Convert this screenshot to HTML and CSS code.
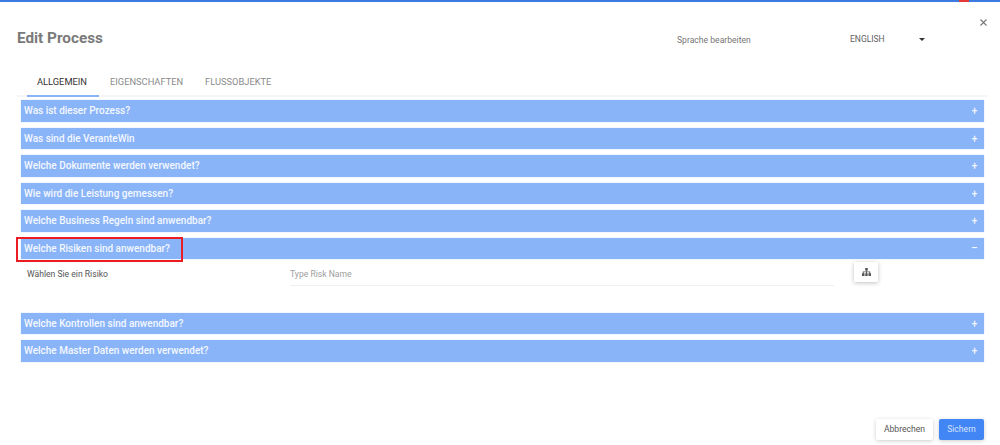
FILE: index.html
```html
<!DOCTYPE html>
<html lang="de">
<head>
<meta charset="utf-8">
<title>Edit Process</title>
<link rel="stylesheet" href="styles.css">
</head>
<body>
<div class="topbar"><span class="topbar-red"></span></div>
<main class="modal">
  <button class="close" aria-label="Close">
    <svg width="7" height="7" viewBox="0 0 7 7"><path d="M.5.5l6 6M6.500.5l-6 6" stroke="#777" stroke-width="1.100" fill="none"/></svg>
  </button>
  <header class="head">
    <h1 class="title">Edit Process</h1>
    <span class="lang-label">Sprache bearbeiten</span>
    <span class="lang-value">ENGLISH</span>
    <span class="caret"></span>
  </header>
  <nav class="tabs">
    <a class="tab active">ALLGEMEIN</a>
    <a class="tab">EIGENSCHAFTEN</a>
    <a class="tab">FLUSSOBJEKTE</a>
  </nav>
  <section class="accordion">
    <div class="bar"><span>Was ist dieser Prozess?</span><i class="sign">+</i></div>
    <div class="bar"><span>Was sind die VeranteWin</span><i class="sign">+</i></div>
    <div class="bar"><span>Welche Dokumente werden verwendet?</span><i class="sign">+</i></div>
    <div class="bar"><span>Wie wird die Leistung gemessen?</span><i class="sign">+</i></div>
    <div class="bar"><span>Welche Business Regeln sind anwendbar?</span><i class="sign">+</i></div>
    <div class="bar open"><span>Welche Risiken sind anwendbar?</span><i class="sign">&#8211;</i><b class="highlight"></b></div>
    <div class="panel">
      <label class="panel-label">Wählen Sie ein Risiko</label>
      <div class="risk-input">Type Risk Name</div>
      <button class="tree-btn" aria-label="Hierarchy">
        <svg width="9" height="8" viewBox="0 0 9 8"><path fill="#555" d="M3.200 0h2.600v2.400H4.900v1h3.300v1.800H9V8H6.500V5.200h.8v-.9H4.900v.9h.8V8H3.300V5.200h.7v-.9H1.700v.9h.8V8H0V5.200h.8V3.400h3.300v-1h-.9z"/></svg>
      </button>
    </div>
    <div class="bar"><span>Welche Kontrollen sind anwendbar?</span><i class="sign">+</i></div>
    <div class="bar"><span>Welche Master Daten werden verwendet?</span><i class="sign">+</i></div>
  </section>
  <footer class="actions">
    <button class="btn cancel">Abbrechen</button>
    <button class="btn save">Sichern</button>
  </footer>
</main>
</body>
</html>
```
FILE: styles.css
```css
* { box-sizing: border-box; }
html, body { margin: 0; height: 100%; }
body {
  width: 1000px;
  height: 445px;
  overflow: hidden;
  background: #fff;
  font-family: Roboto, "Liberation Sans", sans-serif;
  color: #555;
}
.topbar { height: 2px; background: #3b7ae0; display: flex; padding-left: 959px; }
.topbar-red { width: 10px; background: #e53935; }
.modal { position: relative; height: 443px; padding: 0 16px 0 17px; }
.close {
  position: absolute; top: 17px; right: 13px;
  padding: 0; border: 0; background: none; display: flex;
}
.head { height: 71px; display: flex; align-items: flex-start; }
.title {
  margin: 26px 0 0; width: 660px;
  font-size: 15.300px; line-height: 20px; font-weight: 700; color: #7a7a7a;
}
.lang-label { margin-top: 33px; width: 173px; font-size: 8.600px; line-height: 11px; color: #757575; }
.lang-value { margin-top: 32px; width: 69px; font-size: 8.500px; line-height: 11px; color: #616161; }
.caret {
  margin-top: 36px; width: 0; height: 0;
  border-left: 3px solid transparent; border-right: 3px solid transparent;
  border-top: 3px solid #333;
}
.tabs {
  height: 24px; padding-left: 10px;
  display: flex; border-bottom: 2px solid #f5f5f5; width: 970px;
}
.tab {
  height: 24px; padding: 3px 11px 0;
  font-size: 9.300px; line-height: 12px; color: #8a8a8a;
}
.tab.active { color: #333; border-bottom: 2px solid #8ab4f8; width: 72px; padding-left: 10px; padding-right: 0; }
.accordion { margin: 3px 0 0 4px; width: 963px; display: flex; flex-direction: column; gap: 6px; }
.bar {
  position: relative;
  height: 21.500px; background: #8ab4f8; box-shadow: 0 0 1px #b3cdfb;
  display: flex; align-items: center; justify-content: space-between;
  padding: 0 6px 0 3px;
  color: #f4f8ff; font-size: 10px; font-weight: 500;
}
.sign { font-style: normal; font-size: 10px; font-weight: 500; width: 7px; text-align: center; }
.highlight {
  position: absolute; left: -5px; top: -1px; width: 167px; height: 25.500px;
  border: 2px solid #ec1c24;
}
.panel {
  height: 41.500px; padding: 0 0 0 6px;
  display: flex; align-items: flex-start;
}
.panel-label { width: 263px; margin-top: 3.500px; font-size: 8.600px; line-height: 11px; color: #555; }
.risk-input {
  width: 544px; height: 21px; padding-top: 3.500px;
  font-size: 8.600px; line-height: 11px; color: #9e9e9e;
  border-bottom: 1px solid #f0f0f0;
}
.tree-btn {
  margin: -3px 0 0 20px; width: 24px; height: 20px; padding: 0; border: 0;
  background: #fff; box-shadow: 0 1px 4px rgba(0,0,0,.25); border-radius: 1px;
  display: flex; align-items: center; justify-content: center;
}
.actions {
  position: absolute; top: 416.500px; right: 16px;
  display: flex; gap: 6px;
}
.btn {
  height: 21px; border: 0; border-radius: 2px; padding: 0;
  font-family: inherit; font-size: 8.600px;
  box-shadow: 0 1px 4px rgba(0,0,0,.2);
}
.cancel { width: 57px; background: #fff; color: #555; }
.save { width: 45px; background: #4285f4; color: #d6e4fd; }
```
